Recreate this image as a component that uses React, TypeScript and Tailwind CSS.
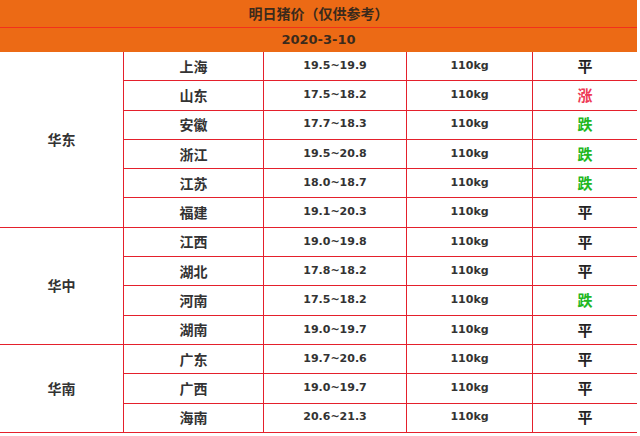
import React from 'react'

type Row = { prov: string; price: string; trend: '平' | '涨' | '跌' }

const groups: { region: string; place: string; rows: Row[] }[] = [
  {
    region: '华东',
    place: 'row-start-1 row-span-6',
    rows: [
      { prov: '上海', price: '19.5~19.9', trend: '平' },
      { prov: '山东', price: '17.5~18.2', trend: '涨' },
      { prov: '安徽', price: '17.7~18.3', trend: '跌' },
      { prov: '浙江', price: '19.5~20.8', trend: '跌' },
      { prov: '江苏', price: '18.0~18.7', trend: '跌' },
      { prov: '福建', price: '19.1~20.3', trend: '平' },
    ],
  },
  {
    region: '华中',
    place: 'row-start-7 row-span-4',
    rows: [
      { prov: '江西', price: '19.0~19.8', trend: '平' },
      { prov: '湖北', price: '17.8~18.2', trend: '平' },
      { prov: '河南', price: '17.5~18.2', trend: '跌' },
      { prov: '湖南', price: '19.0~19.7', trend: '平' },
    ],
  },
  {
    region: '华南',
    place: 'row-start-11 row-span-3',
    rows: [
      { prov: '广东', price: '19.7~20.6', trend: '平' },
      { prov: '广西', price: '19.0~19.7', trend: '平' },
      { prov: '海南', price: '20.6~21.3', trend: '平' },
    ],
  },
]

const trendColor = {
  平: 'text-[#222]',
  涨: 'text-[#ee3a55]',
  跌: 'text-[#22b722]',
}

// base cell, text colour is added per cell
const cell = 'bg-white flex items-center justify-center font-bold'
const cjk = "font-['Noto_Sans_CJK_SC',sans-serif]"
const num = "font-['DejaVu_Sans',sans-serif]"

export default function App() {
  return (
    <div className="w-[640px] h-[436px] bg-white overflow-hidden">
      <div className="w-[637px]">
        <div
          className={`h-[28px] bg-[#ec6a15] border-b border-[#f3301c] flex items-center justify-center text-[14px] font-bold text-[#3b2a1c] ${cjk}`}
        >
          明日猪价（仅供参考）
        </div>
        <div
          className={`h-[24px] bg-[#ec6a15] flex items-center justify-center text-[13px] font-bold text-[#3b2a1c] ${num}`}
        >
          2020-3-10
        </div>
        <div className="grid grid-cols-[123px_139px_142px_125px_104px] auto-rows-[28.3px] gap-px bg-[#e4202c] pr-px pb-px">
          {groups.map((g) => (
            <React.Fragment key={g.region}>
              <div className={`${cell} col-start-1 text-[14px] text-[#333] ${cjk} ${g.place}`}>
                {g.region}
              </div>
              {g.rows.map((r) => (
                <React.Fragment key={r.prov}>
                  <div className={`${cell} col-start-2 text-[14px] text-[#333] ${cjk}`}>{r.prov}</div>
                  <div className={`${cell} text-[11px] text-[#333] ${num}`}>{r.price}</div>
                  <div className={`${cell} text-[11px] text-[#333] ${num}`}>110kg</div>
                  <div className={`${cell} text-[15px] ${cjk} ${trendColor[r.trend]}`}>
                    {r.trend}
                  </div>
                </React.Fragment>
              ))}
            </React.Fragment>
          ))}
        </div>
      </div>
    </div>
  )
}
